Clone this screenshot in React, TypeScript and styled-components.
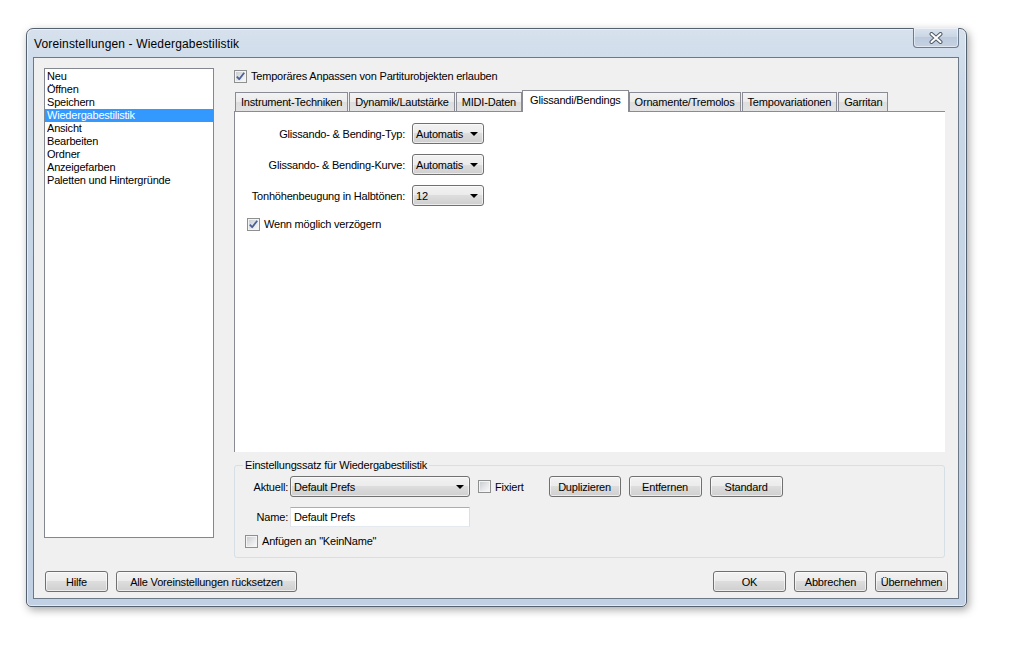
import React from 'react';
import styled, { createGlobalStyle, css } from 'styled-components';

const GlobalStyle = createGlobalStyle`
  html, body {
    margin: 0;
    padding: 0;
    background: #ffffff;
  }
  body {
    font-family: "Liberation Sans", Arial, sans-serif;
    font-size: 11px;
    letter-spacing: -0.2px;
    color: #000;
  }
  * { box-sizing: border-box; }
`;

const Page = styled.div`
  padding: 28px 0 0 26px;
  width: 1017px;
  height: 650px;
`;

const Window = styled.div`
  width: 941px;
  height: 579px;
  display: flex;
  flex-direction: column;
  border: 1px solid #56616f;
  border-radius: 7px 7px 5px 5px;
  background: linear-gradient(#d6e1ed 0%, #c9d7e7 12%, #c1d0e2 100%);
  box-shadow: inset 0 0 0 1px rgba(255, 255, 255, 0.55), 2px 3px 9px rgba(0, 0, 0, 0.35);
  padding: 0 7px 7px 6px;
`;

const TitleBar = styled.div`
  height: 28px;
  display: flex;
  align-items: flex-start;
  justify-content: space-between;
`;

const Title = styled.div`
  font-family: "Liberation Sans", Arial, sans-serif;
  font-size: 12px;
  letter-spacing: 0.15px;
  padding: 8px 0 0 1px;
  color: #000;
`;

const CloseButton = styled.div`
  width: 46px;
  height: 20px;
  margin-top: -1px;
  border: 1px solid #6d7b8e;
  border-top: none;
  border-radius: 0 0 4px 4px;
  background: linear-gradient(#dbe4ef, #c9d5e4 50%, #bccadd 50%, #c5d2e3);
  box-shadow: inset 0 0 0 1px rgba(255, 255, 255, 0.5);
  display: flex;
  align-items: center;
  justify-content: center;
`;

const Client = styled.div`
  flex: 1;
  background: #f0f0f0;
  border: 1px solid #6a7888;
  padding: 10px 10px 6px 10px;
  display: flex;
  flex-direction: column;
`;

const MainRow = styled.div`
  display: flex;
  align-items: flex-start;
  gap: 20px;
  margin-right: 3px;
`;

const CategoryList = styled.ul`
  list-style: none;
  margin: 0;
  padding: 1px 0;
  width: 170px;
  height: 470px;
  background: #fff;
  border: 1px solid #828790;
`;

const CategoryItem = styled.li<{ $selected?: boolean }>`
  height: 13px;
  line-height: 13px;
  padding-left: 2px;
  white-space: nowrap;
  ${(p) =>
    p.$selected &&
    css`
      background: #3399ff;
      color: #fff;
    `}
`;

const RightColumn = styled.div`
  flex: 1;
  display: flex;
  flex-direction: column;
`;

const CheckRow = styled.label<{ $indent?: number; $top?: number }>`
  display: flex;
  align-items: center;
  gap: 4px;
  height: 16px;
  padding-left: ${(p) => p.$indent ?? 0}px;
  margin-top: ${(p) => p.$top ?? 0}px;
  white-space: nowrap;
`;

const CheckBox = styled.span`
  width: 13px;
  height: 13px;
  flex: none;
  border: 1px solid #8e8f8f;
  background: linear-gradient(135deg, #c3c8ce 0%, #e6e7e9 55%, #fbfbfb 100%);
  box-shadow: inset 0 0 0 1px #f4f4f4;
  display: flex;
  align-items: center;
  justify-content: center;
`;

const TabStrip = styled.div`
  display: flex;
  align-items: flex-end;
  gap: 1px;
  height: 21px;
  margin-top: 6px;
  padding-left: 1px;
`;

const Tab = styled.div<{ $active?: boolean }>`
  height: 19px;
  padding: 0 5px;
  border: 1px solid #898c95;
  border-bottom: none;
  background: linear-gradient(#f3f3f3, #ebebeb 50%, #dddddd 50%, #e3e3e3);
  display: flex;
  align-items: center;
  white-space: nowrap;
  ${(p) =>
    p.$active &&
    css`
      position: relative;
      z-index: 1;
      height: 22px;
      margin: 0 -1px -1px;
      padding: 0 7px 3px;
      background: #fff;
    `}
`;

const TabPanel = styled.div`
  height: 341px;
  background: #fff;
  border-top: 1px solid #898c95;
  border-left: 1px solid #898c95;
  padding-top: 11px;
`;

const FieldGrid = styled.div`
  display: grid;
  grid-template-columns: 170px 72px;
  column-gap: 7px;
  row-gap: 10px;
  align-items: center;
`;

const FieldLabel = styled.span`
  text-align: right;
  white-space: nowrap;
`;

const DropDown = styled.div<{ $width?: number }>`
  width: ${(p) => p.$width ?? 72}px;
  height: 21px;
  border: 1px solid #707070;
  border-radius: 3px;
  background: linear-gradient(#f2f2f2, #ebebeb 50%, #dddddd 50%, #cfcfcf);
  box-shadow: inset 0 0 0 1px rgba(255, 255, 255, 0.6);
  display: flex;
  align-items: center;
  justify-content: space-between;
  padding: 0 5px 0 3px;
  white-space: nowrap;
  overflow: hidden;
`;

const Arrow = styled.span`
  width: 0;
  height: 0;
  flex: none;
  border-left: 4px solid transparent;
  border-right: 4px solid transparent;
  border-top: 4px solid #000;
`;

const GroupBox = styled.fieldset`
  margin: 7px 0 0;
  height: 99px;
  border: 1px solid #d5dfe5;
  border-radius: 3px;
  padding: 3px 10px 0;
  display: flex;
  flex-direction: column;
`;

const GroupLegend = styled.legend`
  padding: 0 2px;
  margin-left: -2px;
  line-height: 13px;
`;

const GroupRow = styled.div<{ $gapTop?: number }>`
  display: flex;
  align-items: center;
  margin-top: ${(p) => p.$gapTop ?? 0}px;
`;

const RowLabel = styled.span`
  width: 43px;
  text-align: right;
  margin-right: 2px;
  white-space: nowrap;
`;

const TextInput = styled.div`
  width: 180px;
  height: 20px;
  background: #fff;
  border: 1px solid #abadb3;
  border-color: #abadb3 #dbdfe6 #e3e9ef #e2e3ea;
  display: flex;
  align-items: center;
  padding-left: 3px;
`;

const Button = styled.div<{ $width?: number }>`
  width: ${(p) => p.$width ?? 73}px;
  height: 21px;
  border: 1px solid #707070;
  border-radius: 3px;
  background: linear-gradient(#f2f2f2, #ebebeb 50%, #dddddd 50%, #cfcfcf);
  box-shadow: inset 0 0 0 1px rgba(255, 255, 255, 0.6);
  display: flex;
  align-items: center;
  justify-content: center;
  white-space: nowrap;
`;

const ButtonGroup = styled.div<{ $gap: number; $lead?: number }>`
  display: flex;
  gap: ${(p) => p.$gap}px;
  margin-left: ${(p) => p.$lead ?? 0}px;
`;

const BottomRow = styled.div`
  display: flex;
  justify-content: space-between;
  margin-top: 13px;
  padding-left: 1px;
`;

function Check({ checked }: { checked?: boolean }) {
  return (
    <CheckBox>
      {checked && (
        <svg width="11" height="11" viewBox="0 0 11 11">
          <path d="M1.8 5.6 L4.2 8.2 L9.2 1.8" fill="none" stroke="#4a5f97" strokeWidth="1.8" strokeLinejoin="round" />
        </svg>
      )}
    </CheckBox>
  );
}

const categories = [
  'Neu',
  'Öffnen',
  'Speichern',
  'Wiedergabestilistik',
  'Ansicht',
  'Bearbeiten',
  'Ordner',
  'Anzeigefarben',
  'Paletten und Hintergründe',
];

const tabs = [
  'Instrument-Techniken',
  'Dynamik/Lautstärke',
  'MIDI-Daten',
  'Glissandi/Bendings',
  'Ornamente/Tremolos',
  'Tempovariationen',
  'Garritan',
];

export default function App() {
  return (
    <Page>
      <GlobalStyle />
      <Window>
        <TitleBar>
          <Title>Voreinstellungen - Wiedergabestilistik</Title>
          <CloseButton>
            <svg width="14" height="12" viewBox="0 0 14 12">
              <path d="M2.5 2 L11.5 10 M11.5 2 L2.5 10" stroke="#4f5a69" strokeWidth="4" strokeLinecap="round" />
              <path d="M2.5 2 L11.5 10 M11.5 2 L2.5 10" stroke="#ffffff" strokeWidth="2" strokeLinecap="round" />
            </svg>
          </CloseButton>
        </TitleBar>
        <Client>
          <MainRow>
            <CategoryList>
              {categories.map((c) => (
                <CategoryItem key={c} $selected={c === 'Wiedergabestilistik'}>
                  {c}
                </CategoryItem>
              ))}
            </CategoryList>
            <RightColumn>
              <CheckRow>
                <Check checked />
                Temporäres Anpassen von Partiturobjekten erlauben
              </CheckRow>
              <TabStrip>
                {tabs.map((t) => (
                  <Tab key={t} $active={t === 'Glissandi/Bendings'}>
                    {t}
                  </Tab>
                ))}
              </TabStrip>
              <TabPanel>
                <FieldGrid>
                  <FieldLabel>Glissando- &amp; Bending-Typ:</FieldLabel>
                  <DropDown>
                    Automatis
                    <Arrow />
                  </DropDown>
                  <FieldLabel>Glissando- &amp; Bending-Kurve:</FieldLabel>
                  <DropDown>
                    Automatis
                    <Arrow />
                  </DropDown>
                  <FieldLabel>Tonhöhenbeugung in Halbtönen:</FieldLabel>
                  <DropDown>
                    12
                    <Arrow />
                  </DropDown>
                </FieldGrid>
                <CheckRow $indent={12} $top={10}>
                  <Check checked />
                  Wenn möglich verzögern
                </CheckRow>
              </TabPanel>
              <GroupBox>
                <GroupLegend>Einstellungssatz für Wiedergabestilistik</GroupLegend>
                <GroupRow $gapTop={1}>
                  <RowLabel>Aktuell:</RowLabel>
                  <DropDown $width={180}>
                    Default Prefs
                    <Arrow />
                  </DropDown>
                  <CheckRow $indent={8}>
                    <Check />
                    Fixiert
                  </CheckRow>
                  <ButtonGroup $gap={8} $lead={25}>
                    <Button $width={72}>Duplizieren</Button>
                    <Button $width={73}>Entfernen</Button>
                    <Button $width={73}>Standard</Button>
                  </ButtonGroup>
                </GroupRow>
                <GroupRow $gapTop={10}>
                  <RowLabel>Name:</RowLabel>
                  <TextInput>Default Prefs</TextInput>
                </GroupRow>
                <GroupRow $gapTop={6}>
                  <CheckRow>
                    <Check />
                    Anfügen an "KeinName"
                  </CheckRow>
                </GroupRow>
              </GroupBox>
            </RightColumn>
          </MainRow>
          <BottomRow>
            <ButtonGroup $gap={8}>
              <Button $width={63}>Hilfe</Button>
              <Button $width={181}>Alle Voreinstellungen rücksetzen</Button>
            </ButtonGroup>
            <ButtonGroup $gap={8}>
              <Button>OK</Button>
              <Button>Abbrechen</Button>
              <Button>Übernehmen</Button>
            </ButtonGroup>
          </BottomRow>
        </Client>
      </Window>
    </Page>
  );
}
